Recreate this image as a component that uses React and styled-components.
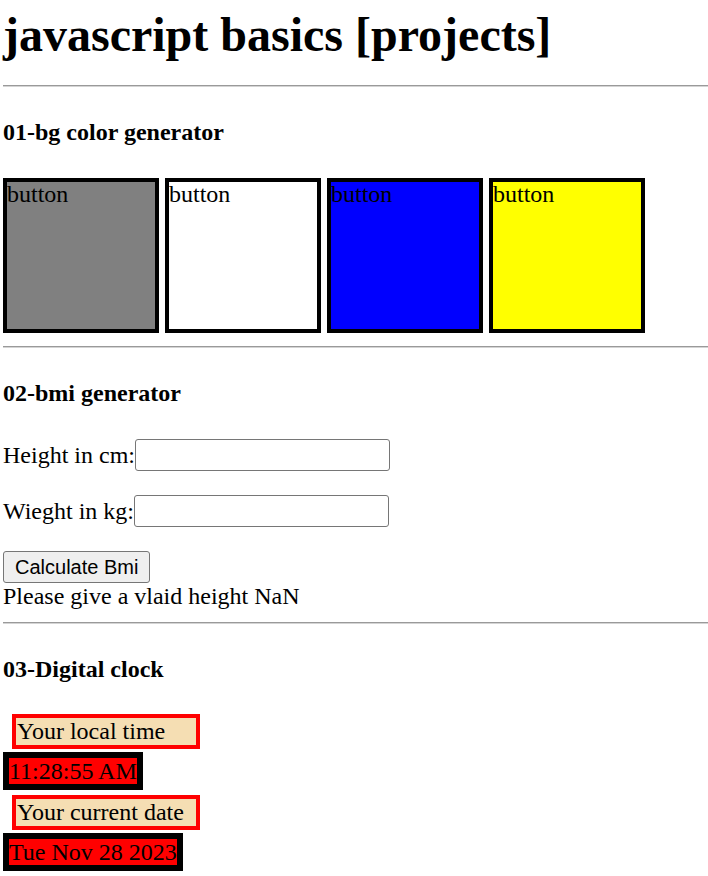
import styled, { createGlobalStyle } from "styled-components";

const GlobalStyle = createGlobalStyle`
  html, body {
    margin: 0;
    padding: 0;
    background: #fff;
  }
  body {
    font-family: "Liberation Serif", "Times New Roman", serif;
    font-size: 24px;
    color: #000;
  }
`;

const Page = styled.div`
  padding: 0 0 0 3px;
`;

const Title = styled.h1`
  font-size: 48px;
  line-height: 55px;
  font-weight: bold;
  margin: 7px 0 23px;
`;

const Rule = styled.hr`
  height: 0;
  margin: ${(p) => p.$top || 0}px 0 0 0;
  border: none;
  border-top: 1px solid #9a9a9a;
  border-bottom: 1px solid #d4d4d4;
`;

const SectionTitle = styled.h4`
  font-size: 24px;
  line-height: 28px;
  font-weight: bold;
  margin: 31px 0 ${(p) => p.$bottom || 32}px;
`;

const BoxRow = styled.div`
  display: flex;
  gap: 6px;
`;

const ColorBox = styled.div`
  box-sizing: border-box;
  width: 156px;
  height: 155px;
  border: 4px solid #000;
  padding-left: 0;
  background: ${(p) => p.$color};
  line-height: 24px;
  cursor: pointer;
`;

const Field = styled.p`
  display: flex;
  align-items: center;
  height: 32px;
  margin: 24px 0;
`;

const Input = styled.input`
  box-sizing: border-box;
  width: 255px;
  height: 32px;
  border: 1px solid #767676;
  border-radius: 3px;
  padding: 2px 3px;
  font-size: 20px;
`;

const CalcButton = styled.button`
  box-sizing: border-box;
  height: 32px;
  padding: 0 11px;
  font-family: "Liberation Sans", Arial, sans-serif;
  font-size: 20px;
  color: #000;
  background: #efefef;
  border: 1px solid #767676;
  border-radius: 3px;
  cursor: pointer;
`;

const Message = styled.div`
  line-height: 26px;
`;

const Clock = styled.div`
  display: flex;
  flex-direction: column;
  align-items: flex-start;
`;

const ClockLabel = styled.div`
  box-sizing: border-box;
  width: 188px;
  margin-left: 9px;
  padding: 0 1px;
  border: 4px solid red;
  background: wheat;
  line-height: 27px;
`;

const ClockValue = styled.div`
  border: 6px solid #000;
  background: red;
  color: #000;
  line-height: 26px;
  margin: 3px 0 5px;
`;

const colors = ["gray", "white", "blue", "yellow"];

export default function App() {
  return (
    <Page>
      <GlobalStyle />
      <Title>javascript basics [projects]</Title>
      <Rule />

      <SectionTitle>01-bg color generator</SectionTitle>
      <BoxRow>
        {colors.map((c) => (
          <ColorBox key={c} $color={c}>
            button
          </ColorBox>
        ))}
      </BoxRow>
      <Rule $top={13} />

      <SectionTitle>02-bmi generator</SectionTitle>
      <Field>
        Height in cm:<Input type="text" />
      </Field>
      <Field>
        Wieght in kg:<Input type="text" />
      </Field>
      <div>
        <CalcButton>Calculate Bmi</CalcButton>
      </div>
      <Message>Please give a vlaid height NaN</Message>
      <Rule $top={13} />

      <SectionTitle $bottom={31}>03-Digital clock</SectionTitle>
      <Clock>
        <ClockLabel>Your local time</ClockLabel>
        <ClockValue>11:28:55 AM</ClockValue>
        <ClockLabel>Your current date</ClockLabel>
        <ClockValue>Tue Nov 28 2023</ClockValue>
      </Clock>
    </Page>
  );
}
